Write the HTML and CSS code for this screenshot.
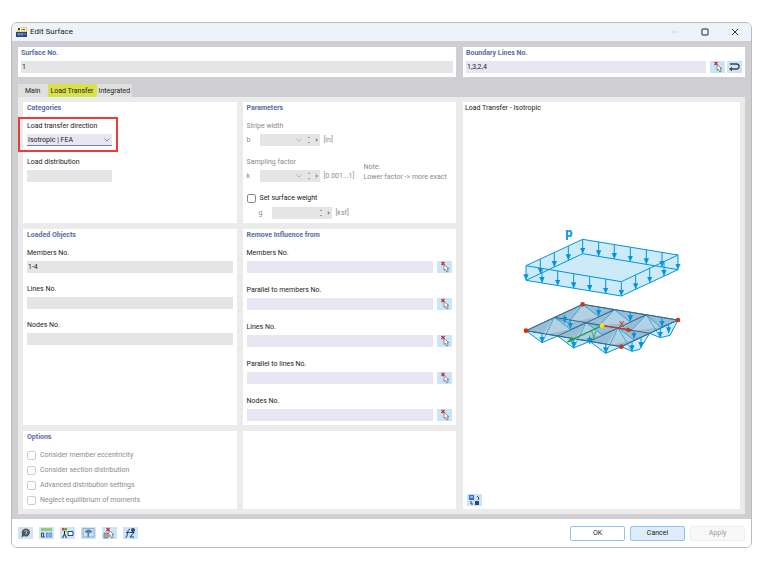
FILE: index.html
```html
<!DOCTYPE html>
<html lang="en">
<head>
<meta charset="utf-8">
<title>Edit Surface</title>
<link rel="stylesheet" href="styles.css">
</head>
<body>
<svg class="defs" aria-hidden="true">
  <defs>
    <symbol id="pick" viewBox="0 0 15 12">
      <path d="M4.500 1l3 3M7.500 1l-3 3" stroke="#d5232f" stroke-width="1.200"/>
      <path d="M7 3.500v6l1.500-1.300 1.200 2.800 1.500-.7-1.200-2.600h2z" fill="#fff" stroke="#666" stroke-width=".7"/>
    </symbol>
    <symbol id="chev" viewBox="0 0 8 6"><path d="M1.500 1.500L4 4.200 6.500 1.500" fill="none" stroke="currentColor" stroke-width=".8"/></symbol>
    <symbol id="spin" viewBox="0 0 4 8"><path d="M.8 2L2 .6 3.200 2zM.8 6L2 7.400 3.200 6z" fill="currentColor"/></symbol>
    <symbol id="next" viewBox="0 0 4 6"><path d="M.8 1L3.200 3 .8 5z" fill="currentColor"/></symbol>
    <marker id="down" viewBox="0 0 16 18" refX="18" refY="8" orient="auto" markerWidth="16" markerHeight="18" markerUnits="userSpaceOnUse"><path d="M0 0v16L18 8z" fill="#0096db"/></marker>
  </defs>
</svg>
<main class="window">
  <header class="titlebar">
    <svg class="app-icon" viewBox="0 0 11 10"><path fill="#25457d" d="M0 5h11v5H0z"/><path fill="#f4cf3f" d="M5 0h6v5H5z"/><path fill="#fff" d="M6 1h4v3H6z"/><path d="M6 2.500h3M8 1.500v2" stroke="#25457d" stroke-width=".7"/><path fill="#f4cf3f" d="M1 3h3v2H1z"/><path fill="#25457d" d="M2 1h2v2H2z"/><path d="M1 7h9M3 6v3M6 6v3" stroke="#dce5f3" stroke-width=".5"/></svg>
    <h1>Edit Surface</h1>
    <button class="win-btn" aria-label="Minimize"><svg viewBox="0 0 8 8"><path d="M1 4h6" stroke="#c9cdd2" stroke-width=".8"/></svg></button>
    <button class="win-btn" aria-label="Maximize"><svg viewBox="0 0 8 8"><rect x="1" y="1" width="6" height="6" rx=".5" fill="none" stroke="#222"/></svg></button>
    <button class="win-btn" aria-label="Close"><svg viewBox="0 0 8 8"><path d="M1 1l6 6M7 1L1 7" stroke="#222" stroke-width=".9"/></svg></button>
  </header>

  <div class="body">
    <div class="top">
      <section class="panel top-panel">
        <label class="heading" for="surface">Surface No.</label>
        <input id="surface" class="readonly" value="1" readonly>
      </section>
      <section class="panel top-panel">
        <label class="heading" for="boundary">Boundary Lines No.</label>
        <div class="row">
          <input id="boundary" value="1,3,2,4">
          <button class="tool" aria-label="Select lines"><svg><use href="#pick"/></svg></button>
          <button class="tool" aria-label="Reverse"><svg viewBox="0 0 15 12"><path d="M3 3h6.500a2.300 2.300 0 0 1 0 5H4" fill="none" stroke="#444" stroke-width="1.300"/><path d="M5 5.800v4.400L2 8z" fill="#444"/></svg></button>
        </div>
      </section>
    </div>

    <nav class="tabs">
      <button class="tab">Main</button>
      <button class="tab active">Load Transfer</button>
      <button class="tab">Integrated</button>
    </nav>

    <div class="page">
      <div class="groups">
        <section class="panel">
          <h2 class="heading">Categories</h2>
          <div class="field marked">
            <label for="direction">Load transfer direction</label>
            <div class="select"><select id="direction"><option>Isotropic | FEA</option></select><svg class="chev"><use href="#chev"/></svg></div>
          </div>
          <div class="field short">
            <label for="distribution">Load distribution</label>
            <input id="distribution" class="readonly" readonly>
          </div>
        </section>

        <section class="panel params">
          <h2 class="heading">Parameters</h2>
          <div class="field off">
            <label for="stripe">Stripe width</label>
            <div class="row"><span class="sym">b</span><div class="spin"><input id="stripe" disabled><svg class="chev"><use href="#chev"/></svg><svg class="ud"><use href="#spin"/></svg><svg class="next"><use href="#next"/></svg></div><span>[in]</span></div>
          </div>
          <div class="field off">
            <label for="sampling">Sampling factor</label>
            <div class="row"><span class="sym">k</span><div class="spin"><input id="sampling" disabled><svg class="chev"><use href="#chev"/></svg><svg class="ud"><use href="#spin"/></svg><svg class="next"><use href="#next"/></svg></div><span>[0.001...1]</span></div>
            <p class="note">Note:<br>Lower factor -&gt; more exact</p>
          </div>
          <label class="check"><input type="checkbox">Set surface weight</label>
          <div class="row off weight"><label class="sym" for="weight">g</label><div class="spin"><input id="weight" disabled><svg class="ud"><use href="#spin"/></svg><svg class="next"><use href="#next"/></svg></div><span>[ksf]</span></div>
        </section>

        <section class="panel">
          <h2 class="heading">Loaded Objects</h2>
          <div class="field"><label for="lm">Members No.</label><input id="lm" class="readonly" value="1-4" readonly></div>
          <div class="field"><label for="ll">Lines No.</label><input id="ll" class="readonly" readonly></div>
          <div class="field"><label for="ln">Nodes No.</label><input id="ln" class="readonly" readonly></div>
        </section>

        <section class="panel influence">
          <h2 class="heading">Remove Influence from</h2>
          <div class="field"><label for="r1">Members No.</label><div class="row"><input id="r1"><button class="tool" aria-label="Select members"><svg><use href="#pick"/></svg></button></div></div>
          <div class="field"><label for="r2">Parallel to members No.</label><div class="row"><input id="r2"><button class="tool" aria-label="Select parallel members"><svg><use href="#pick"/></svg></button></div></div>
          <div class="field"><label for="r3">Lines No.</label><div class="row"><input id="r3"><button class="tool" aria-label="Select lines"><svg><use href="#pick"/></svg></button></div></div>
          <div class="field"><label for="r4">Parallel to lines No.</label><div class="row"><input id="r4"><button class="tool" aria-label="Select parallel lines"><svg><use href="#pick"/></svg></button></div></div>
          <div class="field"><label for="r5">Nodes No.</label><div class="row"><input id="r5"><button class="tool" aria-label="Select nodes"><svg><use href="#pick"/></svg></button></div></div>
        </section>

        <section class="panel options">
          <h2 class="heading">Options</h2>
          <label class="check off"><input type="checkbox" disabled>Consider member eccentricity</label>
          <label class="check off"><input type="checkbox" disabled>Consider section distribution</label>
          <label class="check off"><input type="checkbox" disabled>Advanced distribution settings</label>
          <label class="check off"><input type="checkbox" disabled>Neglect equilibrium of moments</label>
        </section>
        <section class="panel"></section>
      </div>

      <section class="panel preview">
        <p>Load Transfer - Isotropic</p>
        <div class="stage">
          <svg class="diagram" viewBox="34 0 480 411" fill="none" stroke="#0096db" stroke-width="3">
            <text x="163" y="52" class="p">p</text>
            <path d="M216 58L502 105V149L332 228 46 181V137z" fill="#0096db" fill-opacity=".2" stroke="none"/>
            <path d="M216 58L502 105 332 185 46 137zM216 101L502 149 332 228 46 181z"/>
            <g marker-end="url(#down)">
              <path d="M216 58V101"/><path d="M264 66V109"/><path d="M311 74V117"/><path d="M359 82V125"/><path d="M407 90V133"/><path d="M454 97V141"/><path d="M502 105V149"/>
              <path d="M173 78V121"/><path d="M131 98V141"/><path d="M89 117V161"/>
              <path d="M46 137V181"/><path d="M94 145V189"/><path d="M141 153V197"/><path d="M189 161V205"/><path d="M237 169V213"/><path d="M285 177V221"/><path d="M332 185V228"/>
              <path d="M375 165V208"/><path d="M417 145V188"/><path d="M460 125V168"/>
            </g>
            <path class="edge-load" d="M46 332L94 368 141 348 189 384 237 364 285 400 332 380 364 394 387 388 417 340 449 353 478 346 502 300z"/>
            <path class="plane" d="M216 253L502 300 332 380 46 332z"/>
            <g class="cells">
              <path d="M216 253L173 308 264 290z"/><path d="M311 269L264 318 359 306z"/><path d="M407 284L359 334 449 322z"/>
              <path d="M131 292L94 346 179 328z"/><path d="M226 308L189 362 275 344z"/><path d="M322 324L285 378 370 360z"/>
            </g>
            <g stroke-width="2">
              <path d="M131 292L94 368M131 292L179 328 226 308 189 384M226 308L275 344 322 324 285 400M322 324L364 394M322 324L370 360 417 340"/>
              <path d="M216 253L264 290 311 269 359 306 407 284 449 322 502 300"/>
              <path d="M216 253L173 308 131 292M311 269L264 318 226 308M407 284L359 334 322 324M407 284L449 353"/>
            </g>
            <path d="M131 292L417 340M141 348L311 269M237 364L407 284M216 253L502 300 332 380 46 332z" stroke="#47637c"/>
            <g marker-end="url(#down)"><path d="M94 340V368"/><path d="M189 356V384"/><path d="M285 372V400"/><path d="M364 366V394"/><path d="M391 354V384"/><path d="M449 325V353"/><path d="M474 313V340"/><path d="M264 262V288"/><path d="M359 278V304"/><path d="M454 293V320"/><path d="M162 284V308"/><path d="M179 300V326"/><path d="M370 332V356"/><path d="M237 346V372"/></g>
            <path d="M274 317L178 362" stroke="#16a34a" stroke-width="4"/><path d="M166 368l18-17 6 12z" fill="#16a34a" stroke="none"/>
            <path d="M274 317L354 329" stroke="#cc3712" stroke-width="4"/><path d="M370 332l-21-10-2 14z" fill="#cc3712" stroke="none"/>
            <text x="325" y="320" class="x">x</text><text x="241" y="352" class="y">y</text>
            <g fill="#cc3712" stroke="none"><circle cx="216" cy="253" r="7"/><circle cx="502" cy="300" r="7"/><circle cx="332" cy="380" r="7"/><circle cx="46" cy="332" r="7"/></g>
            <circle cx="274" cy="317" r="7" fill="#ffe100" stroke="none"/>
          </svg>
        </div>
        <button class="tool" aria-label="Switch picture"><svg viewBox="0 0 15 12"><path fill="#2f6be0" d="M2 1h5v5H2z"/><path d="M3 3h3" stroke="#fff"/><path fill="#24487f" d="M8 7h4v4H8z"/><path d="M10 2l2 2-1 2M4 7v3h2" fill="none" stroke="#444"/></svg></button>
      </section>
    </div>
  </div>

  <footer class="footer">
    <div class="tools">
      <button class="tool" aria-label="Help"><svg viewBox="0 0 15 12"><path d="M8 1.500a4 4 0 1 1-2 7.500L3.500 10.500 4 7A4 4 0 0 1 8 1.500z" fill="#555"/><path d="M6.500 4.500c.5-1.500 3-1 2.500.5L8 6v1.500" fill="none" stroke="#cbe4f8" stroke-width=".9"/></svg></button>
      <button class="tool" aria-label="Units"><svg viewBox="0 0 15 12"><path fill="#8fce78" d="M2 1h11v3H2z"/><path fill="#b3cdfa" d="M6.500 5H13v6H6.500z"/><path d="M2.500 6h2v4h-2z" fill="none" stroke="#222" stroke-width=".8"/><path d="M5.500 9.500v1" stroke="#222" stroke-width=".8"/><path d="M7.500 6H9v4H7.500zM10.800 6h1.500v4h-1.500z" fill="none" stroke="#4b78d8" stroke-width=".7"/></svg></button>
      <button class="tool" aria-label="Display"><svg viewBox="0 0 15 12"><path fill="#e43b2c" d="M2 1h2.500v2.500H2z"/><path fill="#47b04b" d="M4.500 1H7v2.500H4.500z"/><path fill="#f2c21a" d="M4.500 3.500H7V5H4.500z"/><path d="M4.500 4v3L2.500 11M4.500 7l2 4" fill="none" stroke="#222"/><path d="M8 4.500h5v4H8z" fill="#fff" stroke="#24487f"/></svg></button>
      <button class="tool" aria-label="View"><svg viewBox="0 0 15 12"><path d="M2 1.500h11v8.500H2z" fill="none" stroke="#7997b5" stroke-width=".7"/><path d="M3.500 5c1.500-3.500 7-3.500 8 0-.8 1-1.800 1-2.500.2L8 7v3H6.500V6z" fill="#557fa6"/></svg></button>
      <button class="tool" aria-label="Deselect"><svg viewBox="0 0 15 12"><path d="M2 6h4v5H2z" fill="#aaa" stroke="#666" stroke-width=".6"/><use href="#pick"/></svg></button>
      <button class="tool" aria-label="Formula"><svg viewBox="0 0 15 12"><path d="M2.500 10.500c2.500 0 1.500-8.500 4.500-8.500M3 5.500h3.500M7 5.500h4l-4 4.500h4" fill="none" stroke="#1f3864"/><circle cx="10" cy="3" r="2" fill="#24487f"/></svg></button>
    </div>
    <button class="btn">OK</button>
    <button class="btn primary">Cancel</button>
    <button class="btn" disabled>Apply</button>
  </footer>
</main>
</body>
</html>
```
FILE: styles.css
```css
* { box-sizing: border-box; margin: 0; }
body { padding: 22px 8px 22px 11px; background: #fff; color: #222; font: 7px/10px Roboto, "Open Sans", sans-serif; }
button, input, select { font: inherit; color: inherit; border: 0; border-radius: 0; padding: 0; background: none; }
svg { display: block; }
.defs { position: absolute; width: 0; height: 0; }

.window { display: flex; flex-direction: column; min-height: calc(100vh - 44px); border: 1px solid #bbb; border-radius: 6px; overflow: hidden; }
.titlebar { display: flex; align-items: center; height: 18px; padding: 0 7px 0 4px; background: #edf3f9; }
.app-icon { width: 11px; height: 10px; }
.titlebar h1 { flex: 1; margin-left: 3px; font-size: 8px; font-weight: 400; }
.win-btn { display: grid; place-items: center; width: 30px; height: 18px; }
.win-btn:last-child { margin-right: -6px; }
.win-btn svg { width: 8px; height: 8px; }

.body { flex: 1; display: flex; flex-direction: column; padding: 6px 6px 5px; background: #cfced3; }
.panel { background: #fff; padding: 1px 4px 3px; min-width: 0; }
.heading { display: block; font-size: 7px; line-height: 10px; font-weight: 700; color: #5a6d9e; }
.top { display: grid; grid-template-columns: 438fr 282fr; gap: 7px; }
.top-panel { display: flex; flex-direction: column; gap: 3px; padding: 1px 3px 4px; }
.top-panel .row { gap: 2px; }
.top-panel .row input { margin-right: 2px; }

input, select { display: block; width: 100%; min-width: 0; height: 12px; padding: 0 1px; background: #e7e6f2; }
.readonly, .spin { background: #e5e5e5; }
.row { display: flex; align-items: center; gap: 4px; }
.row > input { flex: 1; }
.tool { flex: none; width: 15px; height: 12px; background: #cbe4f8; }
.tool svg { width: 15px; height: 12px; }

.tabs { display: flex; margin-top: 7px; }
.tab { height: 13px; padding: 0 2px; background: #dfdfdf; }
.tab:first-child { padding: 0 7px; }
.tab.active { background: #d9e04a; padding: 0 3px; }

.page { flex: 1; display: grid; grid-template-columns: 433fr 277fr; gap: 7px; padding: 5px; background: #ebebeb; }
.groups { display: grid; grid-template-columns: 1fr 1fr; grid-template-rows: auto 1fr auto; gap: 6px; }
.field { position: relative; margin-top: 8px; }
.field > label { display: block; margin-bottom: 3px; }
.field + .field { margin-top: 11px; }
.influence .field + .field { margin-top: 12px; }
.short, .marked { width: 85px; }
.select { position: relative; }
select { appearance: none; border-bottom: 1px solid #7b7ab8; }
.chev { width: 8px; height: 6px; color: #777; }
.select .chev { position: absolute; right: 1px; top: 3px; pointer-events: none; }
.marked::after { content: ""; position: absolute; inset: -4px -6px -6px -9px; border: 2px solid #ed3b3b; pointer-events: none; }

.off, .params .off { color: #8b8b8b; }
.sym { width: 9px; }
.spin { display: flex; align-items: center; gap: 4px; width: 60px; height: 12px; padding-right: 1px; }
.spin input { flex: 1; background: none; }
.spin .chev { color: #aaa; }
.spin .ud { width: 4px; height: 8px; }
.spin .next { width: 4px; height: 6px; }
.note { position: absolute; left: 117px; top: 5px; white-space: nowrap; }
.check { display: flex; align-items: center; gap: 4px; }
.check input { appearance: none; width: 9px; height: 9px; border: 1px solid #8c8c8c; border-radius: 2px; background: #fff; }
.check input:disabled { border-color: #ccc; }
.params { padding-bottom: 4px; }
.params .check { margin-top: 11px; }
.weight { margin-top: 4px; padding-left: 12px; }
.options { padding-bottom: 4px; }
.options .check { margin-top: 5px; }
.options .heading + .check { margin-top: 8px; }

.preview { display: flex; flex-direction: column; align-items: flex-start; padding: 1px 2px 3px; }
.preview > .tool { margin-left: 2px; }
.stage { flex: 1; display: grid; place-items: center; width: 100%; padding-bottom: 30px; }
.diagram { width: 160px; height: 137px; }
.diagram text { stroke: none; font-family: "Open Sans", sans-serif; }
.p { fill: #0096db; font-size: 36px; font-weight: 700; }
.x { fill: #cc3712; font-size: 32px; }
.y { fill: #16a34a; font-size: 32px; }
.plane { fill: #98bdd6; }
.edge-load { fill: #d2eafa; }
.cells { fill: #b4d0e3; stroke: none; }

.footer { display: flex; align-items: center; gap: 5px; height: 28px; padding: 0 6px; background: #fff; }
.tools { display: flex; gap: 6px; flex: 1; }
.btn { width: 55px; height: 15px; border: 1px solid #8cc4ec; border-radius: 2px; background: #fff; }
.primary { background: #deedf9; }
.btn:disabled { color: #999; border-color: #eee; background: #f8f8f8; }
```
